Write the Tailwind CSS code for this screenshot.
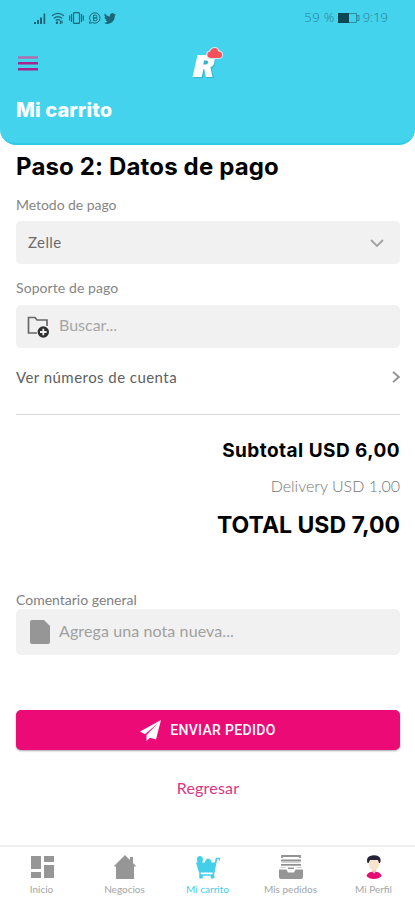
<!DOCTYPE html>
<html lang="es">

<head>
    <meta charset="UTF-8" />
    <meta name="viewport" content="width=device-width, initial-scale=1.0" />
    <title>Mi carrito</title>
    <script src="https://cdn.jsdelivr.net/npm/@tailwindcss/browser@4"></script>
</head>

<body class="bg-white">
    <div class="w-[415px] h-[900px] flex flex-col overflow-hidden font-['Lato',sans-serif] text-[#6b6b6b] whitespace-nowrap">

        <header class="h-[145px] shrink-0 bg-[#43d3ed] rounded-b-[16px] border-b-2 border-[#2dc9e5]">
            <!-- Barra de estado -->
            <div class="h-9 pl-[34px] pr-[27px] flex items-center justify-between text-[#287f91]">
                <div class="flex items-center gap-1 text-[#1b6677]">
                    <svg class="w-[13px] h-3" viewBox="0 0 13 12" fill="currentColor">
                        <path d="M0 10h2v2H0zM3 8h2v4H3zM6 5.500h2V12H6zM9.500 1.500h1.700V12H9.500z" />
                    </svg>
                    <svg class="w-[14px] h-3" viewBox="0 0 14 12" fill="none" stroke="currentColor" stroke-width="1.200">
                        <path d="M1 3.800Q7-1 13 3.800M2.800 6.200q4.200-3.300 8.400 0M4.700 8.400q2.300-1.700 4.600 0" />
                        <circle cx="6" cy="10.800" r=".7" fill="currentColor" /><path d="M9.500 9v3M11 8.500v3" />
                    </svg>
                    <svg class="w-[15px] h-3" viewBox="0 0 15 12" fill="none" stroke="currentColor" stroke-width="1.200">
                        <rect x="4.500" y=".6" width="6" height="10.800" rx="1" /><path d="M2.500 2v8M.6 3.500v5M12.500 2v8M14.400 3.500v5" />
                    </svg>
                    <svg class="w-[14px] h-3" viewBox="0 0 14 12" fill="none" stroke="currentColor" stroke-width="1">
                        <path d="M1.500 11.300l.8-2.700a5.200 5.200 0 1 1 2.100 2zM5.500 3.200h2q1.400 0 1.400 1.400T7.500 6h-2zM5.500 6h2.200q1.400 0 1.400 1.300T7.700 8.600H5.500z" />
                    </svg>
                    <svg class="-ml-0.5 w-3 h-[11px]" viewBox="0 2 24 20" fill="currentColor" preserveAspectRatio="none">
                        <path d="M24 4.600a10 10 0 0 1-2.800.8 5 5 0 0 0 2.100-2.700 10 10 0 0 1-3.100 1.200 4.900 4.900 0 0 0-8.400 4.500A14 14 0 0 1 1.700 3.100a4.900 4.900 0 0 0 1.500 6.600 5 5 0 0 1-2.200-.6 4.900 4.900 0 0 0 4 4.800 5 5 0 0 1-2.300.1 4.900 4.900 0 0 0 4.600 3.400A10 10 0 0 1 0 19.500 14 14 0 0 0 21.500 7.100 10 10 0 0 0 24 4.600z" />
                    </svg>
                </div>
                <div class="flex items-center gap-[3px] text-[13px] font-light font-['Open_Sans',sans-serif]">
                    <span class="tracking-[0.4px]">59 %</span>
                    <svg class="w-[22px] h-[10px]" viewBox="0 0 22 10" fill="none">
                        <path d="M.5.5h18v9H.5zM19 2.500h2v5h-2z" stroke="#2b8fa3" />
                        <path d="M0 0h11v10H0z" fill="#0d4654" />
                    </svg>
                    <span>9:19</span>
                </div>
            </div>

            <!-- Menú y logo -->
            <div class="h-[54px] px-[18px] grid grid-cols-3 items-center">
                <svg class="w-5 h-[15px]" viewBox="0 0 20 15">
                    <path d="M0 1.500h20" stroke="#b36bae" stroke-width="2.500" />
                    <path d="M0 7.300h20M0 13.200h20" stroke="#a8248c" stroke-width="2.500" />
                </svg>
                <svg class="w-8 h-[34px] justify-self-center" viewBox="0 0 32 34">
                    <path d="M7 10.500h12q6 1 5 7-.7 4-3.500 5L23 32h-7.500l-2-8L12 32H2.500z" fill="#2497ac" opacity=".5" />
                    <path d="M6.500 9h12q6 0 5 6.500-.6 4.500-4 5.800L21.500 31H15l-1.800-8h-.7L10.800 31H1.500zM13 14.500l-.7 4h2.500q2 0 2.300-2t-1.600-2z" fill="#fff" fill-rule="evenodd" />
                    <path d="M19 13a4.200 4.200 0 0 1-1-8.200Q20 1 24 1q3 0 4 3.200 4 1 4 4.300-.1 4.500-4 4.500z" fill="#d3eff5" />
                    <path d="M19.300 11.900a3.300 3.300 0 0 1-.3-6.500Q20.500 2 24 2q2.600.1 3.200 3.200 3.900.5 3.900 3.500 0 3.200-3 3.200z" fill="#f9505b" />
                </svg>
            </div>
            <h1 class="px-4 h-10 leading-10 text-[20px] font-extrabold text-white font-['Inter',sans-serif] tracking-[0.1px]">Mi carrito</h1>
        </header>

        <main class="flex-1 px-4 pr-[15px] flex flex-col">
            <h2 class="h-[43px] leading-[43px] text-[24px] font-bold text-black font-['Inter',sans-serif] tracking-[0.15px]">Paso 2: Datos de pago</h2>

            <div class="h-[33px] leading-[34px] text-[14px] text-[#858585] tracking-[-0.05px]">Metodo de pago</div>
            <div class="h-[43px] shrink-0 bg-[#f1f1f1] rounded-[5px] pl-3 pr-4 flex items-center justify-between text-[15px]">
                <span class="tracking-[0.4px]">Zelle</span>
                <svg class="w-[14px] h-2" viewBox="0 0 14 8" fill="none" stroke="#a2a2a2" stroke-width="1.800">
                    <path d="M1 1l6 6 6-6" />
                </svg>
            </div>

            <div class="h-[41px] leading-[47px] text-[14px] text-[#858585] tracking-[0.08px]">Soporte de pago</div>
            <div class="h-[43px] shrink-0 bg-[#f1f1f1] rounded-[5px] pl-[11px] flex items-center gap-[10px] text-[16px] text-[#a6a6a6]">
                <svg class="w-[22px] h-[22px]" viewBox="0 0 22 22" fill="none">
                    <path d="M10 17H1.500V1.500H8L10 4h10v6" stroke="#686868" stroke-width="1.700" />
                    <circle cx="16.300" cy="16" r="5.700" fill="#303030" />
                    <path d="M16.300 12.700v6.600M13 16h6.600" stroke="#f1f1f1" stroke-width="1.800" />
                </svg>
                <span class="-mt-[3px]">Buscar...</span>
            </div>

            <div class="h-[67px] pb-[8px] shrink-0 flex items-center justify-between border-b border-[#d8d8d8] text-[15px] text-[#606060]">
                <span class="tracking-[0.45px]">Ver números de cuenta</span>
                <svg class="w-2 h-3" viewBox="0 0 8 12" fill="none" stroke="#909090" stroke-width="1.800">
                    <path d="M1 .8L6.800 6 1 11.200" />
                </svg>
            </div>

            <div class="h-[175px] pt-[18px] shrink-0 text-right text-black font-['Inter',sans-serif]">
                <div class="h-[35px] leading-9 text-[19px] font-bold tracking-[0.45px]">Subtotal USD 6,00</div>
                <div class="h-9 leading-9 text-[16px] font-light text-[#777] font-['Lato',sans-serif]">Delivery USD 1,00</div>
                <div class="h-10 leading-[42px] text-[23px] font-bold">TOTAL USD 7,00</div>
            </div>

            <div class="h-[19px] leading-[19px] text-[14px] text-[#808080]">Comentario general</div>
            <div class="h-[46px] shrink-0 bg-[#f1f1f1] rounded-[5px] pl-[14px] flex items-center gap-[9px] text-[16px] text-[#a0a0a0]">
                <svg class="w-5 h-6" viewBox="0 0 20 24" fill="#969696">
                    <path d="M2 0h12l6 6v16q0 2-2 2H2q-2 0-2-2V2q0-2 2-2z" />
                </svg>
                <span class="-mt-0.5 tracking-[0.1px]">Agrega una nota nueva...</span>
            </div>

            <button class="mt-[55px] h-10 shrink-0 bg-[#eb0a76] rounded-[5px] shadow-[0_1px_2px_rgba(0,0,0,.35)] flex items-center justify-center gap-[9px] text-[14px] font-medium text-white font-['Roboto',sans-serif]">
                <svg class="w-[21px] h-[21px]" viewBox="0 0 21 21" fill="#fff">
                    <path d="M21 0L0 11.500l5 2.800L18 3 6.500 15v6l3.500-3.300 6 1.800z" />
                </svg>
                <span class="tracking-[0.33px]">ENVIAR PEDIDO</span>
            </button>
            <div class="mt-[18px] h-10 leading-10 text-center text-[16px] text-[#d8367f] tracking-[0.2px]">Regresar</div>
        </main>

        <nav class="h-[55px] shrink-0 border-t-2 border-[#efefef] pt-[8px] grid grid-cols-5 text-[10px] text-[#a5a5a5]">
            <div class="flex flex-col items-center">
                <svg class="w-6 h-6" viewBox="0 0 24 24" fill="#969696">
                    <path d="M1 1h10v13H1zM14 1h10v6H14zM1 17h10v6H1zM14 10h10v13H14z" />
                </svg>
                <span class="leading-5">Inicio</span>
            </div>
            <div class="flex flex-col items-center">
                <svg class="w-6 h-6" viewBox="0 0 24 24" fill="#969696">
                    <path d="M12 0L.5 11.500H3V24h18V11.500h2.500L20 8V2h-3v3z" />
                </svg>
                <span class="leading-5">Negocios</span>
            </div>
            <div class="flex flex-col items-center text-[#43cfea]">
                <svg class="w-6 h-6" viewBox="0 0 24 24" fill="none">
                    <path d="M17.500 18L20.500 3.500H24V6" stroke="currentColor" stroke-width="1.700" />
                    <path d="M0 7.500h20L18 17.500H3zM.8 4q.5-3 3-3t3.200 3q0 2-1 4H1.500zM9 8q0-4 3-4.500Q15.500 4 15.500 8z" fill="currentColor" />
                    <path d="M4 17v3h13.500v-3" stroke="currentColor" stroke-width="1.400" />
                    <circle cx="5" cy="21.800" r="2" fill="currentColor" /><circle cx="16.500" cy="21.800" r="2" fill="currentColor" />
                </svg>
                <span class="leading-5">Mi carrito</span>
            </div>
            <div class="flex flex-col items-center">
                <svg class="w-6 h-6" viewBox="0 0 24 24" fill="none" stroke="#929292">
                    <path d="M3 3V1h18v2M2 5.500h20M2 9.800h20" stroke-width="1.800" />
                    <path d="M2.500 7.600h19M1.500 12.500h5M17.500 12.500h5" stroke="#cfcfcf" stroke-width="1" />
                    <path d="M0 14.500h7.500L9 17.500h6l1.500-3H24V22q0 2-2 2H2q-2 0-2-2zM9 12.500h6V14H9z" fill="#969696" stroke="none" />
                </svg>
                <span class="leading-5">Mis pedidos</span>
            </div>
            <div class="flex flex-col items-center">
                <svg class="w-6 h-6" viewBox="0 0 24 24">
                    <path d="M10 13h4v5h-4z" fill="#eed3b7" />
                    <path d="M6.500 4h11v5q-1 6-5.500 6T6.500 9z" fill="#f8e5ce" />
                    <path d="M5.500 8Q4 3 7 1.500 12-.8 16 1q4 2 2 7h-1L16 5H8L6.500 8z" fill="#252337" />
                    <path d="M4.500 21q.5-3.500 5.500-4.300h4q5 .8 5.500 4.300-2.500 3-7.500 3t-7.500-3z" fill="#e70c72" />
                    <path d="M9.800 16.500h4.400L12 18.500z" fill="#f8e5ce" />
                </svg>
                <span class="leading-5">Mi Perfil</span>
            </div>
        </nav>
    </div>
</body>

</html>
